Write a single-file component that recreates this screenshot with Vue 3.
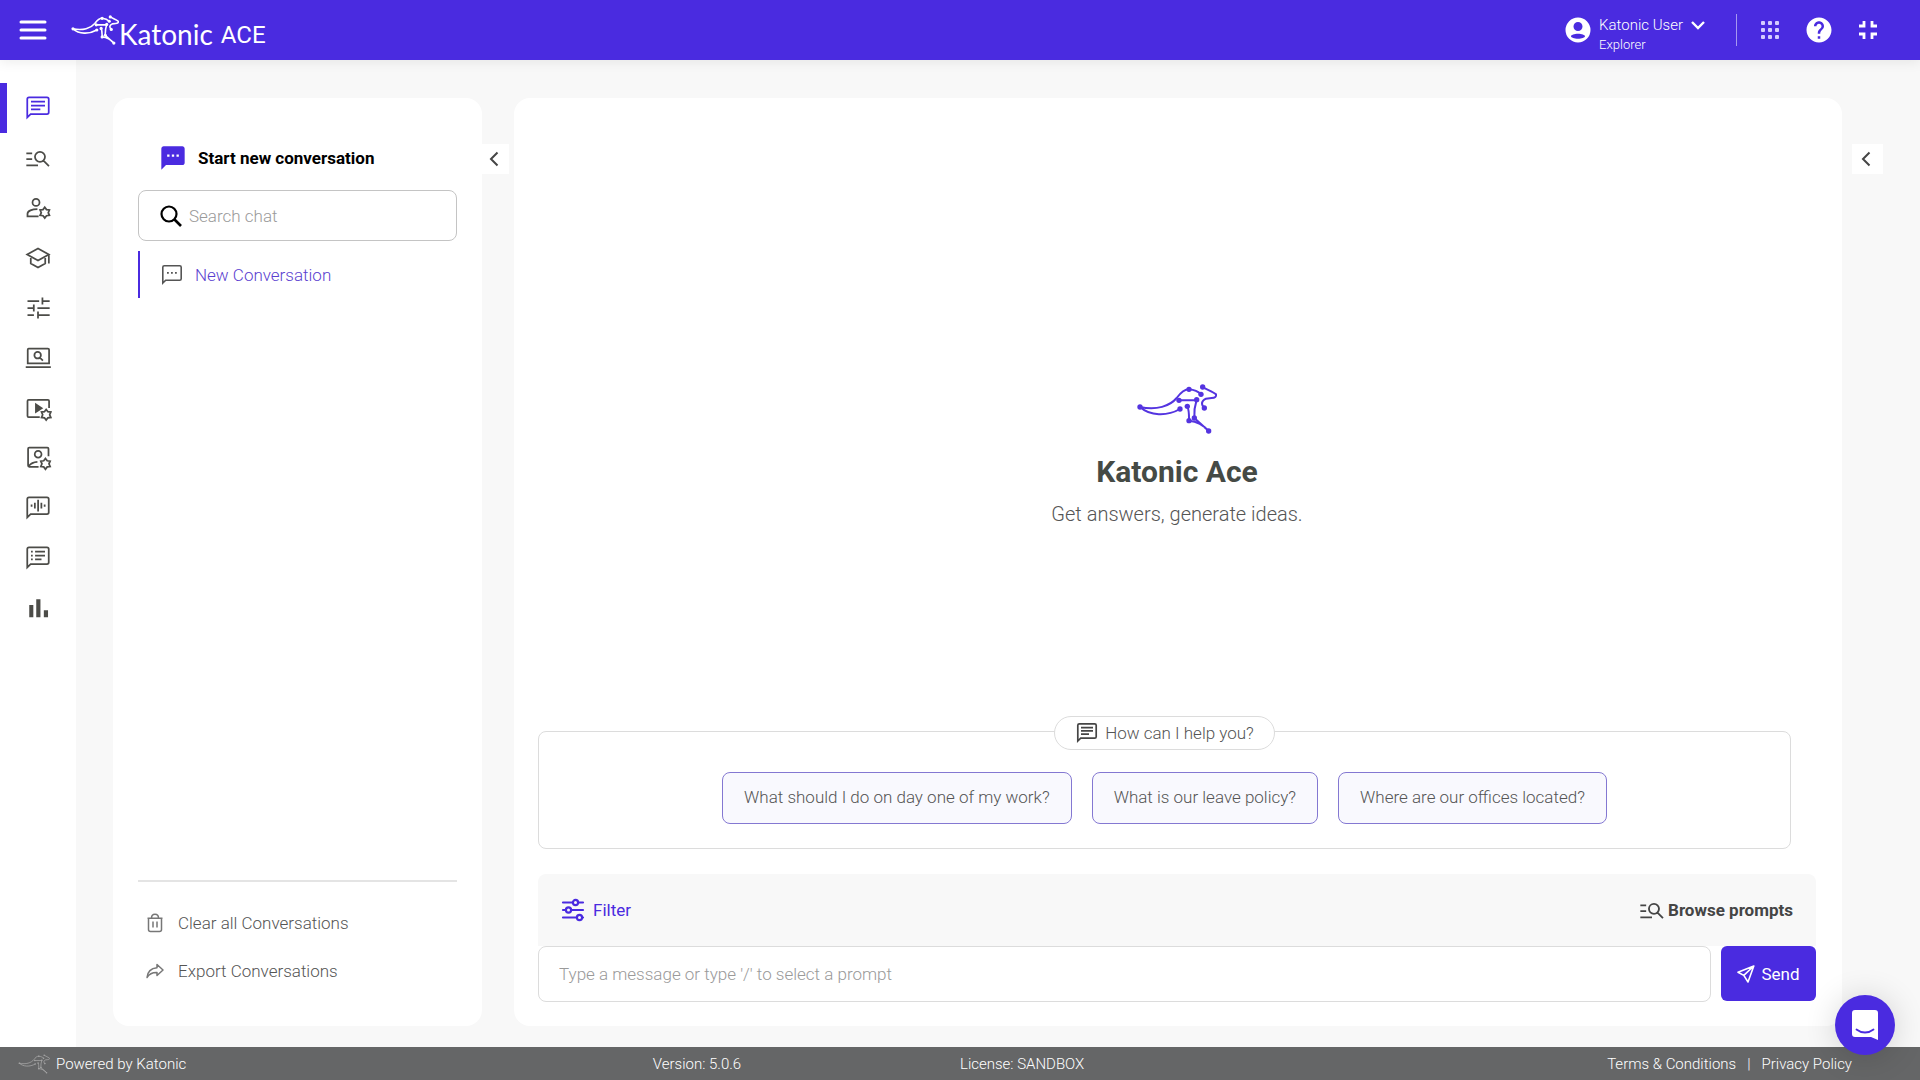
<template>
  <div class="app">
    <header class="topbar">
      <button type="button" class="icon-btn menu-btn" aria-label="Menu">
        <svg width="28" height="20" viewBox="0 0 28 20">
          <path d="M2 2h24M2 10h24M2 18h24" fill="none" stroke="#fff" stroke-width="3" stroke-linecap="round" />
        </svg>
      </button>
      <div class="brand">
        <svg class="roo roo-top" viewBox="320 42 242 150">
          <path :d="rooLines" />
          <circle v-for="(n, i) in rooNodes" :key="i" :cx="n[0]" :cy="n[1]" r="8" />
        </svg>
        <span class="brand-name">Katonic</span>
        <span class="brand-product">ACE</span>
      </div>

      <button type="button" class="user">
        <svg width="30" height="30" viewBox="0 0 24 24">
          <path
            fill="#fff"
            fill-rule="evenodd"
            d="M12 2a10 10 0 1 0 0 20 10 10 0 0 0 0-20zm0 3.6a3.6 3.6 0 1 1 0 7.2 3.6 3.6 0 0 1 0-7.2zM12 15c3 0 5.6 1 5.6 2s-2.6 2-5.6 2-5.6-1-5.6-2 2.6-2 5.6-2z"
          />
        </svg>
        <span class="user-text">
          <span class="user-name">
            Katonic User
            <svg width="16" height="10" viewBox="0 0 16 10">
              <path d="M2 2l6 6 6-6" fill="none" stroke="#fff" stroke-width="2.4" />
            </svg>
          </span>
          <span class="user-role">Explorer</span>
        </span>
      </button>
      <span class="divider"></span>
      <button type="button" class="icon-btn" aria-label="Apps">
        <svg width="18" height="18" viewBox="0 0 18 18" fill="#d5ccff">
          <template v-for="y in [0, 7, 14]" :key="y">
            <rect v-for="x in [0, 7, 14]" :key="x" :x="x" :y="y" width="4" height="4" rx="1" />
          </template>
        </svg>
      </button>
      <button type="button" class="icon-btn" aria-label="Help">
        <svg width="30" height="30" viewBox="0 0 24 24">
          <path
            fill="#fff"
            d="M12 2C6.48 2 2 6.48 2 12s4.48 10 10 10 10-4.48 10-10S17.52 2 12 2zm1 17h-2v-2h2v2zm2.07-7.75-.9.92C13.45 12.9 13 13.5 13 15h-2v-.5c0-1.1.45-2.1 1.17-2.83l1.24-1.26c.37-.36.59-.86.59-1.41 0-1.1-.9-2-2-2s-2 .9-2 2H8c0-2.21 1.79-4 4-4s4 1.79 4 4c0 .88-.36 1.68-.93 2.25z"
          />
        </svg>
      </button>
      <button type="button" class="icon-btn" aria-label="Exit full screen">
        <svg width="18" height="18" viewBox="0 0 18 18">
          <path d="M0 5h5V0M13 0v5h5M0 13h5v5M13 18v-5h5" fill="none" stroke="#fff" stroke-width="2.8" />
        </svg>
      </button>
    </header>

    <div class="body">
      <nav class="rail">
        <a
          v-for="item in navItems"
          :key="item.label"
          href="#"
          class="rail-item"
          :class="{ active: item.label === activeNav }"
          :aria-label="item.label"
          @click.prevent="activeNav = item.label"
        >
          <svg width="28" height="28" viewBox="0 0 24 24">
            <path v-if="item.fill" :d="item.fill" fill="currentColor" />
            <path v-if="item.line" :d="item.line" fill="none" stroke="currentColor" stroke-width="1.5" />
          </svg>
        </a>
      </nav>

      <div class="workspace">
        <!-- CONVERSATIONS -->
        <aside class="card history">
          <button type="button" class="new-chat">
            <svg width="28" height="28" viewBox="0 0 24 24">
              <path
                fill="#4a2be0"
                d="M20 2H4c-1.1 0-2 .9-2 2v18l4-4h14c1.1 0 2-.9 2-2V4c0-1.1-.9-2-2-2z"
              />
              <path fill="#fff" d="M7 9h2v2H7zM11 9h2v2h-2zM15 9h2v2h-2z" />
            </svg>
            Start new conversation
          </button>

          <label class="search">
            <svg width="22" height="22" viewBox="0 0 22 22">
              <circle cx="9" cy="9" r="7.5" fill="none" stroke="#000" stroke-width="2.2" />
              <path d="M14.5 14.5l6.5 6.5" stroke="#000" stroke-width="2.6" />
            </svg>
            <input v-model="search" type="text" placeholder="Search chat" aria-label="Search chat" />
          </label>

          <button type="button" class="chat-row">
            <svg width="24" height="24" viewBox="0 0 24 24">
              <path :d="bubble" fill="none" stroke="#555" stroke-width="1.6" />
              <path d="M7 9h1.8v1.8H7zM11 9h1.8v1.8H11zM15 9h1.8v1.8H15z" fill="#555" />
            </svg>
            New Conversation
          </button>

          <div class="history-actions">
            <button type="button">
              <svg width="18" height="20" viewBox="0 0 18 20" fill="none" stroke="#777" stroke-width="1.5">
                <path d="M1.5 5.2h15M2.500 5.2v11.300a2 2 0 0 0 2 2h9a2 2 0 0 0 2-2V5.200M5.500 5c0-5 7-5 7 0M7 8.500v6M11 8.500v6" />
              </svg>
              Clear all Conversations
            </button>
            <button type="button">
              <svg width="18" height="16" viewBox="0 0 18 16" fill="none" stroke="#777" stroke-width="1.5">
                <path d="M11 1.5l6 5.5-6 5.5v-3C6 9.300 3.500 10.500 1 14.500 1.500 9 5 5.200 11 4.700z" stroke-linejoin="round" />
              </svg>
              Export Conversations
            </button>
          </div>
        </aside>
        <button type="button" class="collapse collapse-left" aria-label="Collapse conversations">
          <svg width="10" height="16" viewBox="0 0 10 16"><path d="M8.5 1.5L2 8l6.5 6.5" /></svg>
        </button>

        <!-- CHAT -->
        <main class="card chat">
          <div class="hero">
            <svg class="roo roo-hero" viewBox="320 42 242 150">
              <path :d="rooLines" />
              <circle v-for="(n, i) in rooNodes" :key="i" :cx="n[0]" :cy="n[1]" r="8" />
            </svg>
            <h1>Katonic Ace</h1>
            <p>Get answers, generate ideas.</p>
          </div>

          <section class="help">
            <div class="help-title">
              <svg width="24" height="24" viewBox="0 0 24 24" fill="none" stroke="#454545" stroke-width="1.7">
                <path :d="bubble + bubbleText" />
              </svg>
              How can I help you?
            </div>
            <div class="prompts">
              <button v-for="p in prompts" :key="p" type="button" @click="message = p">{{ p }}</button>
            </div>
          </section>

          <section class="composer">
            <div class="toolbar">
              <button type="button" class="filter-btn">
                <svg width="24" height="24" viewBox="0 0 24 24" fill="none" stroke="#4a2be0" stroke-width="2.2" stroke-linecap="round">
                  <path d="M2 4.500h9.500M17.500 4.500H22M2 12h3M11 12h11M2 19.500h13.500M21.500 19.500H22" />
                  <circle cx="14.5" cy="4.5" r="2.6" />
                  <circle cx="7.5" cy="12" r="2.6" />
                  <circle cx="18.5" cy="19.5" r="2.6" />
                </svg>
                Filter
              </button>
              <button type="button" class="browse-btn">
                <svg width="28" height="28" viewBox="0 0 24 24" fill="none" stroke="#454545" stroke-width="1.6">
                  <path :d="manageSearch" />
                </svg>
                Browse prompts
              </button>
            </div>
            <form class="message" @submit.prevent="message = ''">
              <input
                v-model="message"
                type="text"
                placeholder="Type a message or type '/' to select a prompt"
                aria-label="Message"
              />
              <button type="submit">
                <svg width="18" height="18" viewBox="0 0 18 18" fill="none" stroke="#fff" stroke-width="1.6" stroke-linejoin="round">
                  <path d="M16.8 1L1 7.2l5.8 3.2L11 17zM6.8 10.4L16.8 1" />
                </svg>
                Send
              </button>
            </form>
          </section>
        </main>
        <button type="button" class="collapse collapse-right" aria-label="Open settings panel">
          <svg width="10" height="16" viewBox="0 0 10 16"><path d="M8.5 1.5L2 8l6.5 6.5" /></svg>
        </button>
      </div>
    </div>

    <footer class="footer">
      <span class="powered">
        <svg class="roo roo-foot" viewBox="320 42 242 150">
          <path :d="rooLines" />
          <circle v-for="(n, i) in rooNodes" :key="i" :cx="n[0]" :cy="n[1]" r="6" />
        </svg>
        Powered by Katonic
      </span>
      <span>Version: 5.0.6</span>
      <span>License: SANDBOX</span>
      <span class="legal">
        <a href="#">Terms &amp; Conditions</a>
        <span>|</span>
        <a href="#">Privacy Policy</a>
      </span>
    </footer>

    <button type="button" class="messenger" aria-label="Open messenger">
      <svg width="28" height="32" viewBox="0 0 28 32">
        <path d="M4 1h20a3 3 0 0 1 3 3v27l-7-3H4a3 3 0 0 1-3-3V4a3 3 0 0 1 3-3z" fill="#fff" />
        <path d="M5.5 20.5c5 4 12 4 17 0" fill="none" stroke="#4a2be0" stroke-width="1.8" stroke-linecap="round" />
      </svg>
    </button>
  </div>
</template>

<script setup>
import { ref } from "vue"

const search = ref("")
const message = ref("")
const activeNav = ref("Chat")

const prompts = [
  "What should I do on day one of my work?",
  "What is our leave policy?",
  "Where are our offices located?",
]

// Kangaroo logo: lines and the joints that sit on them
const rooLines =
  "M330 111C380 122 420 108 440 84C452 68 462 58 477 58C495 60 505 65 513 73" +
  "M330 111C360 138 410 140 450 117M447 91H500M500 89C494 108 492 126 493 144L536 183" +
  "M472 109C478 122 477 138 477 152C500 154 518 162 536 183" +
  "M518 51C530 59 548 64 558 73C560 80 555 84 545 84L528 86C514 93 512 102 523 114"
const rooNodes = [
  [330, 111], [477, 58], [513, 73], [518, 51], [447, 91], [500, 89],
  [450, 117], [472, 109], [523, 114], [493, 144], [477, 152], [536, 183],
]

// Icon outlines on a 24 grid
const bubble = "M2.8 20V4.3q0-1.5 1.5-1.5h15.4q1.5 0 1.5 1.5v11.4q0 1.5-1.5 1.500H5.700z"
const bubbleText = "M6 6.600h12M6 9.900h12M6 13.200h8"
const manageSearch = "M2 8h5M2 13h5M2 18.300h10M18 11a4.300 4.300 0 1 1-8.600 0 4.300 4.300 0 0 1 8.600 0zM16.700 14.200l4.700 4.700"

// Six-toothed gear outline
function gear(cx, cy) {
  const points = []
  for (let i = 0; i < 12; i++) {
    const r = i % 2 ? 3 : 4.6
    const a = (i * Math.PI) / 6 - Math.PI / 2
    points.push(`${(cx + r * Math.cos(a)).toFixed(2)} ${(cy + r * Math.sin(a)).toFixed(2)}`)
  }
  return "M" + points.join("L") + "Z"
}

const navItems = [
  { label: "Chat", line: bubble + bubbleText },
  { label: "Prompts", line: manageSearch },
  {
    label: "Personas",
    line: "M13.3 7.2a3 3 0 1 1-6 0 3 3 0 0 1 6 0zM11.5 13C7 13 3 14.5 3 17v2.2h9.5" + gear(17.8, 16),
  },
  {
    label: "Training",
    line: "M12 3.800L2.700 9 12 14.200 21.300 9zM5.800 11v5.800L12 20.200l6.200-3.400V11M21.300 9v7.800",
  },
  {
    label: "Tuning",
    line: "M3 6h10M15.800 3v6M16 6h6M3 12h5M8.400 9v6M11.500 12H22M3 18h5.500M12 15v6M12 18h10",
  },
  {
    label: "Explore",
    line: "M4 4h16.500q1 0 1 1v11.500H3.200V5q0-1 .8-1zM1.500 19.800h21.500M14.500 9.600a2.800 2.800 0 1 1-5.600 0 2.800 2.800 0 0 1 5.600 0zM13.600 11.600l2.600 2.600",
  },
  {
    label: "Media",
    fill: "M9.500 7.500l7 4.700-7 4.600z",
    line: "M13.500 19.800H4q-1 0-1-1V6q0-1 1-1h16.500q1 0 1 1v6" + gear(19, 17.8),
  },
  {
    label: "Characters",
    line: "M12.500 19.500H4.500q-1 0-1-1V4q0-1 1-1h15.500q1 0 1 1v6.500M15 8.700a2.900 2.900 0 1 1-5.800 0 2.900 2.900 0 0 1 5.800 0zM4 19c1.500-2 4-3.500 7.500-3.700" + gear(18.4, 17),
  },
  {
    label: "Voice",
    line: bubble + "M6.500 9v2M9.300 7.500v5M12.100 5v10M14.900 7.500v5M17.700 9v2",
  },
  {
    label: "Logs",
    line: bubble + "M6 6.600h1.500M6 9.900h1.500M6 13.200h1.500M9.500 6.600H18M9.500 9.900H18M9.500 13.200H15",
  },
  { label: "Analytics", fill: "M4.500 9.500H8V20H4.500zM10.500 4.500h3.600V20h-3.600zM17 14h3.600v6H17z" },
]
</script>

<style>
body {
  margin: 0;
}
</style>

<style scoped>
.app {
  display: flex;
  flex-direction: column;
  min-height: 100vh;
  background: #f8f8f8;
  color: #555;
  font-family: Roboto, "Liberation Sans", sans-serif;
  font-size: 17px;
  font-weight: 300;
}

.app * {
  box-sizing: border-box;
}

button,
input {
  font: inherit;
  color: inherit;
}

button {
  display: flex;
  align-items: center;
  padding: 0;
  border: none;
  background: none;
  cursor: pointer;
}

a {
  color: inherit;
  text-decoration: none;
}

svg {
  flex: none;
  display: block;
}

/* logo */
.roo path {
  fill: none;
  stroke: currentColor;
  stroke-width: 6;
}

.roo circle {
  fill: currentColor;
}

.roo-top {
  width: 48px;
  height: 30px;
}

.roo-top path {
  stroke-width: 8;
}

.roo-hero {
  width: 82px;
  height: 50px;
  color: #5434e0;
}

.roo-foot {
  width: 32px;
  height: 20px;
  color: #a5a5a5;
}

/* top bar */
.topbar {
  position: relative;
  z-index: 1;
  display: flex;
  align-items: center;
  height: 60px;
  padding: 0 28px 0 19px;
  background: #4a2be0;
  color: #fff;
  box-shadow: 0 2px 12px rgba(0, 0, 0, 0.08);
}

.icon-btn {
  justify-content: center;
  width: 49px;
  height: 40px;
}

.menu-btn {
  width: 28px;
}

.brand {
  display: flex;
  align-items: center;
  margin: 0 auto 0 24px;
}

.brand-name {
  padding-top: 8px;
  font-family: Lato, "Liberation Sans", sans-serif;
  font-size: 28px;
  font-weight: 400;
  line-height: 32px;
}

.brand-product {
  padding-top: 10px;
  margin-left: 8px;
  font-size: 24px;
  font-weight: 400;
  line-height: 32px;
}

.user {
  gap: 6px;
  text-align: left;
}

.user-text {
  display: flex;
  flex-direction: column;
  padding-top: 10px;
}

.user-name {
  display: flex;
  align-items: center;
  gap: 7px;
  font-size: 15px;
  line-height: 20px;
}

.user-role {
  font-size: 13px;
  line-height: 20px;
}

.divider {
  width: 1px;
  height: 32px;
  margin: 0 8px 0 30px;
  background: #a698f0;
}

/* side rail */
.body {
  flex: 1;
  display: flex;
}

.rail {
  width: 76px;
  padding-top: 23px;
  background: #fff;
}

.rail-item {
  display: flex;
  align-items: center;
  height: 50px;
  padding-left: 17px;
  border-left: 7px solid transparent;
  color: #4c4c48;
}

.rail-item.active {
  border-color: #4a2be0;
  color: #4a2be0;
}

/* workspace */
.workspace {
  flex: 1;
  display: flex;
  align-items: stretch;
  min-width: 0;
  padding: 38px 37px 21px;
}

.card {
  display: flex;
  flex-direction: column;
  background: #fff;
  border-radius: 16px;
}

.history {
  width: 369px;
  padding: 42px 25px 35px;
}

.new-chat {
  gap: 11px;
  height: 36px;
  padding-left: 21px;
  color: #000;
  font-weight: 700;
}

.search {
  display: flex;
  align-items: center;
  gap: 7px;
  height: 51px;
  margin-top: 14px;
  padding: 0 21px;
  border: 1px solid #c4c4c4;
  border-radius: 8px;
}

input::placeholder {
  color: #9a9a9a;
  opacity: 1;
}

.search input {
  flex: 1;
  min-width: 0;
  padding: 0;
  border: none;
  outline: none;
  background: none;
}

.chat-row {
  gap: 11px;
  height: 47px;
  margin-top: 10px;
  padding-left: 20px;
  border-left: 2px solid #4a2be0;
  color: #5b3fd0;
}

.history-actions {
  display: flex;
  flex-direction: column;
  gap: 8px;
  margin-top: auto;
  padding-top: 21px;
  border-top: 2px solid #e4e4e4;
}

.history-actions button {
  height: 40px;
  padding-left: 8px;
  gap: 14px;
}

.collapse {
  justify-content: center;
  height: 30px;
  margin-top: 46px;
  background: #fff;
}

.collapse path {
  fill: none;
  stroke: #454545;
  stroke-width: 2;
}

.collapse-left {
  width: 27px;
  margin-right: 5px;
  padding-right: 4px;
}

.collapse-right {
  width: 31px;
  margin-left: 10px;
  padding-right: 4px;
}

/* chat */
.chat {
  flex: 1;
  min-width: 0;
  padding: 0 26px 24px 24px;
}

.hero {
  flex: 1;
  display: flex;
  flex-direction: column;
  align-items: center;
  justify-content: center;
  padding-top: 80px;
}

.hero h1 {
  margin: 20px 0 0;
  color: #454a45;
  font-size: 30px;
  font-weight: 700;
  line-height: 36px;
}

.hero p {
  margin: 12px 0 0;
  font-size: 20px;
  line-height: 24px;
}

.help {
  display: flex;
  flex-direction: column;
  align-items: center;
  margin-right: 25px;
  padding-bottom: 24px;
  border: 1px solid #dcdcdc;
  border-radius: 8px;
}

.help-title {
  display: flex;
  align-items: center;
  gap: 6px;
  height: 34px;
  margin-top: -16px;
  padding: 0 20px;
  border: 1px solid #dcdcdc;
  border-radius: 17px;
  background: #fff;
}

.prompts {
  display: flex;
  gap: 20px;
  margin-top: 22px;
}

.prompts button {
  height: 52px;
  padding: 0 21px 2px;
  border: 1px solid #8478d2;
  border-radius: 8px;
  background: #f9f9fe;
}

.composer {
  margin-top: 25px;
}

.toolbar {
  display: flex;
  align-items: center;
  justify-content: space-between;
  height: 72px;
  padding: 0 23px;
  border-radius: 8px 8px 0 0;
  background: #f8f8f8;
}

.filter-btn {
  gap: 8px;
  color: #4a2be0;
  font-weight: 400;
}

.browse-btn {
  gap: 2px;
  color: #454545;
  font-weight: 700;
}

.message {
  display: flex;
  gap: 10px;
}

.message input {
  flex: 1;
  min-width: 0;
  height: 56px;
  padding: 0 20px;
  border: 1px solid #dcdcdc;
  border-radius: 8px;
  outline: none;
  background: #fff;
}

.message button {
  justify-content: center;
  gap: 6px;
  width: 95px;
  height: 55px;
  border-radius: 6px;
  background: #4a2be0;
  color: #fff;
  font-weight: 400;
}

/* footer */
.footer {
  display: grid;
  grid-template-columns: 34% 16% 1fr auto;
  align-items: center;
  height: 33px;
  background: #656667;
  color: #fff;
  font-size: 15px;
}

.powered {
  display: flex;
  align-items: center;
  gap: 6px;
  padding-left: 18px;
}

.legal {
  display: flex;
  gap: 11px;
  padding-right: 68px;
}

.messenger {
  position: fixed;
  right: 25px;
  bottom: 25px;
  z-index: 2;
  justify-content: center;
  width: 60px;
  height: 60px;
  border-radius: 50%;
  background: #4a2be0;
  box-shadow: 0 2px 32px rgba(0, 0, 0, 0.16);
}
</style>
